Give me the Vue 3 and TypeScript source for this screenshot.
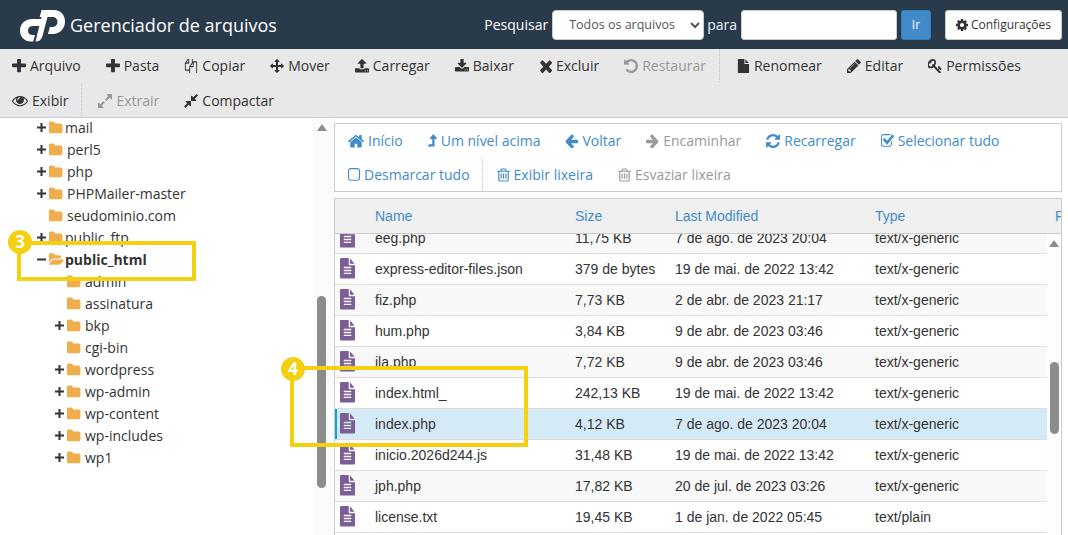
<script setup lang="ts">
interface Icon { d: string; vb: string; w: number; h?: number }
const P: Record<string, Icon> = {
  plus: { vb: '192 192 1408 1408', w: 14, d: 'M1600 736v192q0 40-28 68t-68 28h-416v416q0 40-28 68t-68 28h-192q-40 0-68-28t-28-68v-416h-416q-40 0-68-28t-28-68v-192q0-40 28-68t68-28h416v-416q0-40 28-68t68-28h192q40 0 68 28t28 68v416h416q40 0 68 28t28 68z' },
  files: { vb: '-128 128 2048 1536', w: 14, d: 'M1696 384q40 0 68 28t28 68v1216q0 40-28 68t-68 28h-960q-40 0-68-28t-28-68v-288h-544q-40 0-68-28t-28-68v-672q0-40 20-88t48-76l408-408q28-28 76-48t88-20h416q40 0 68 28t28 68v328q68-40 128-40h416zm-544 213l-299 299h299v-299zm-640-384l-299 299h299v-299zm196 647l316-316v-416h-384v416q0 40-28 68t-68 28h-416v640h512v-256q0-40 20-88t48-76zm956 804v-1152h-384v416q0 40-28 68t-68 28h-416v640h896z' },
  arrows: { vb: '0 0 1792 1792', w: 14, d: 'M1792 896q0 26-19 45l-256 256q-19 19-45 19t-45-19-19-45v-128h-384v384h128q26 0 45 19t19 45-19 45l-256 256q-19 19-45 19t-45-19l-256-256q-19-19-19-45t19-45 45-19h128v-384h-384v128q0 26-19 45t-45 19-45-19l-256-256q-19-19-19-45t19-45l256-256q19-19 45-19t45 19 19 45v128h384v-384h-128q-26 0-45-19t-19-45 19-45l256-256q19-19 45-19t45 19l256 256q19 19 19 45t-19 45-45 19h-128v384h384v-128q0-26 19-45t45-19 45 19l256 256q19 19 19 45z' },
  upload: { vb: '64 64 1664 1664', w: 14, d: 'M1344 1472q0-26-19-45t-45-19-45 19-19 45 19 45 45 19 45-19 19-45zm256 0q0-26-19-45t-45-19-45 19-19 45 19 45 45 19 45-19 19-45zm128-224v320q0 40-28 68t-68 28h-1472q-40 0-68-28t-28-68v-320q0-40 28-68t68-28h427q21 56 70.500 92t110.500 36h256q61 0 110.500-36t70.500-92h427q40 0 68 28t28 68zm-325-648q-17 40-59 40h-256v448q0 26-19 45t-45 19h-256q-26 0-45-19t-19-45v-448h-256q-42 0-59-40-17-39 14-69l448-448q18-19 45-19t45 19l448 448q31 30 14 69z' },
  download: { vb: '64 64 1664 1664', w: 14, d: 'M1344 1344q0-26-19-45t-45-19-45 19-19 45 19 45 45 19 45-19 19-45zm256 0q0-26-19-45t-45-19-45 19-19 45 19 45 45 19 45-19 19-45zm128-224v320q0 40-28 68t-68 28h-1472q-40 0-68-28t-28-68v-320q0-40 28-68t68-28h465l135 136q58 56 136 56t136-56l136-136h464q40 0 68 28t28 68zm-325-569q17 41-14 70l-448 448q-18 19-45 19t-45-19l-448-448q-31-29-14-70 17-39 59-39h256v-448q0-26 19-45t45-19h256q26 0 45 19t19 45v448h256q42 0 59 39z' },
  times: { vb: '182 238 1308 1316', w: 13, d: 'M1490 1322q0 40-28 68l-136 136q-28 28-68 28t-68-28l-294-294-294 294q-28 28-68 28t-68-28l-136-136q-28-28-28-68t28-68l294-294-294-294q-28-28-28-68t28-68l136-136q28-28 68-28t68 28l294 294 294-294q28-28 68-28t68 28l136 136q28 28 28 68t-28 68l-294 294 294 294q28 28 28 68z' },
  undo: { vb: '128 128 1536 1536', w: 14, d: 'M1664 896q0 156-61 298t-164 245-245 164-298 61q-172 0-327-72.500t-264-204.500q-7-10-6.500-22.500t8.500-20.500l137-138q10-9 25-9 16 2 23 12 73 95 179 147t225 52q104 0 198.500-40.500t163.500-109.500 109.500-163.500 40.500-198.500-40.500-198.500-109.500-163.500-163.500-109.500-198.500-40.500q-98 0-188 35.500t-160 101.500l137 138q31 30 14 69-17 40-59 40h-448q-26 0-45-19t-19-45v-448q0-42 40-59 39-17 69 14l130 129q107-101 244.500-156.500t284.500-55.500q156 0 298 61t245 164 164 245 61 298z' },
  file: { vb: '-128 0 1920 1792', w: 14, d: 'M1152 512v-472q22 14 36 28l408 408q14 14 28 36h-472zm-128 32q0 40 28 68t68 28h544v1056q0 40-28 68t-68 28h-1344q-40 0-68-28t-28-68v-1600q0-40 28-68t68-28h800v544z' },
  pencil: { vb: '128 128 1536 1536', w: 14, d: 'M491 1536l91-91-235-235-91 91v107h128v128h107zm523-928q0-22-22-22-10 0-17 7l-542 542q-7 7-7 17 0 22 22 22 10 0 17-7l542-542q7-7 7-17zm-54-192l416 416-832 832h-416v-416zm683 96q0 53-37 90l-166 166-416-416 166-165q36-38 90-38 53 0 91 38l235 234q37 39 37 91z' },
  key: { vb: '64 128 1664 1536', w: 14, d: 'M832 512q0-80-56-136t-136-56-136 56-56 136q0 42 19 83-41-19-83-19-80 0-136 56t-56 136 56 136 136 56 136-56 56-136q0-42-19-83 41 19 83 19 80 0 136-56t56-136zm851 704q0 17-49 66t-66 49q-9 0-28.500-16t-36.500-33-38.500-40-24.500-26l-96 96 220 220q28 28 28 68 0 42-39 81t-81 39q-40 0-68-28l-671-671q-176 131-365 131-163 0-265.500-102.500t-102.500-265.500q0-160 95-313t248-248 313-95q163 0 265.500 102.500t102.500 265.500q0 189-131 365l355 355 96-96q-3-3-26-24.500t-40-38.500-33-36.500-16-28.500q0-17 49-66t66-49q13 0 23 10 6 6 46 44.500t82 79.500 86.500 86 73 78 28.500 41z' },
  eye: { vb: '0 160 1792 1568', w: 16, d: 'M1664 960q-152-236-381-353 61 104 61 225 0 185-131.500 316.500t-316.500 131.500-316.500-131.500-131.500-316.500q0-121 61-225-229 117-381 353 133 205 333.500 326.500t434.500 121.500 434.500-121.500 333.500-326.500zm-720-384q0-20-14-34t-34-14q-125 0-214.500 89.500t-89.500 214.500q0 20 14 34t34 14 34-14 14-34q0-86 61-147t147-61q20 0 34-14t14-34zm848 384q0 34-20 69-140 230-376.500 368.500t-499.500 138.500-499.500-139-376.500-368q-20-35-20-69t20-69q140-229 376.500-368t499.500-139 499.500 139 376.500 368q20 35 20 69z' },
  expand: { vb: '128 128 1536 1536', w: 14, d: 'M883 1056q0 13-10 23l-332 332 144 144q19 19 19 45t-19 45-45 19h-448q-26 0-45-19t-19-45v-448q0-26 19-45t45-19 45 19l144 144 332-332q10-10 23-10t23 10l114 114q10 10 10 23zm781-864v448q0 26-19 45t-45 19-45-19l-144-144-332 332q-10 10-23 10t-23-10l-114-114q-10-10-10-23t10-23l332-332-144-144q-19-19-19-45t19-45 45-19h448q26 0 45 19t19 45z' },
  compress: { vb: '128 128 1536 1536', w: 14, d: 'M896 960v448q0 26-19 45t-45 19-45-19l-144-144-332 332q-10 10-23 10t-23-10l-114-114q-10-10-10-23t10-23l332-332-144-144q-19-19-19-45t19-45 45-19h448q26 0 45 19t19 45zm755-672q0 13-10 23l-332 332 144 144q19 19 19 45t-19 45-45 19h-448q-26 0-45-19t-19-45v-448q0-26 19-45t45-19 45 19l144 144 332-332q10-10 23-10t23 10l114 114q10 10 10 23z' },
  cog: { vb: '128 128 1536 1536', w: 12, h: 12, d: 'M1152 896q0-106-75-181t-181-75-181 75-75 181 75 181 181 75 181-75 75-181zm512-109v222q0 12-8 23t-20 13l-185 28q-19 54-39 91 35 50 107 138 10 12 10 25t-9 23q-27 37-99 108t-94 71q-12 0-26-9l-138-108q-44 23-91 38-16 136-29 186-7 28-36 28h-222q-14 0-24.500-8.500t-11.500-21.500l-28-184q-49-16-90-37l-141 107q-10 9-25 9-14 0-25-11-126-114-165-168-7-10-7-23 0-12 8-23 15-21 51-66.500t54-70.500q-27-50-41-99l-183-27q-13-2-21-12.500t-8-23.500v-222q0-12 8-23t19-13l186-28q14-46 39-92-40-57-107-138-10-12-10-24 0-10 9-23 26-36 98.500-107.500t94.500-71.500q13 0 26 10l138 107q44-23 91-38 16-136 29-186 7-28 36-28h222q14 0 24.500 8.500t11.500 21.500l28 184q49 16 90 37l142-107q9-9 24-9 13 0 25 10 129 119 165 170 7 8 7 22 0 12-8 23-15 21-51 66.500t-54 70.500q26 50 41 98l183 28q13 2 21 12.500t8 23.500z' },
  home: { vb: '92 160 1608 1440', w: 16, d: 'M1472 992v480q0 26-19 45t-45 19h-384v-384h-256v384h-384q-26 0-45-19t-19-45v-480q0-1 .5-3t.5-3l575-474 575 474q1 2 1 6zm223-69l-62 74q-8 9-21 11h-3q-13 0-21-7l-692-577-692 577q-12 8-24 7-13-2-21-11l-62-74q-8-10-7-23.500t11-21.500l719-599q32-26 76-26t76 26l244 204v-195q0-14 9-23t23-9h192q14 0 23 9t9 23v408l219 182q10 8 11 21.500t-7 23.500z' },
  levelUp: { vb: '420 128 990 1536', w: 9, d: 'M1395 635q-17 33-59 33h-192v800q0 14-9 23t-23 9h-704q-21 0-29-18-8-20 4-35l160-192q9-11 25-11h320v-576h-192q-41 0-59-33-17-34 6-64l320-384q18-22 49-22t49 22l320 384q23 30 6 64z' },
  left: { vb: '128 128 1536 1536', w: 13, d: 'M1664 896v128q0 53-32.500 90.500t-84.500 37.500h-704l293 294q38 36 38 90t-38 90l-75 76q-37 37-90 37-52 0-91-37l-651-652q-37-37-37-90 0-52 37-91l651-650q38-38 91-38 52 0 90 38l75 74q38 38 38 91t-38 91l-293 293h704q52 0 84.500 37.500t32.500 90.500z' },
  right: { vb: '128 128 1536 1536', w: 13, d: 'M1600 960q0 54-37 91l-651 651q-39 37-91 37-51 0-90-37l-75-75q-38-38-38-91t38-91l293-293h-704q-52 0-84.500-37.500t-32.500-90.500v-128q0-53 32.500-90.500t84.500-37.500h704l-293-294q-38-36-38-90t38-90l75-75q38-38 90-38 53 0 91 38l651 651q37 35 37 90z' },
  refresh: { vb: '128 128 1536 1536', w: 14, d: 'M1639 1056q0 5-1 7-64 268-268 434.500t-478 166.500q-146 0-282.500-55t-243.500-157l-129 129q-19 19-45 19t-45-19-19-45v-448q0-26 19-45t45-19h448q26 0 45 19t19 45-19 45l-137 137q71 66 161 102t187 36q134 0 250-65t186-179q11-17 53-117 8-23 30-23h192q13 0 22.500 9.500t9.500 22.500zm25-800v448q0 26-19 45t-45 19h-448q-26 0-45-19t-19-45 19-45l138-138q-148-137-349-137-134 0-250 65t-186 179q-11 17-53 117-8 23-30 23h-199q-13 0-22.500-9.500t-9.500-22.500v-7q65-268 270-434.500t480-166.500q146 0 284 55.500t245 156.500l130-129q19-19 45-19t45 19 19 45z' },
  check: { vb: '64 128 1664 1536', w: 13, d: 'M1472 930v318q0 119-84.500 203.500t-203.500 84.500h-832q-119 0-203.500-84.500t-84.500-203.500v-832q0-119 84.500-203.500t203.500-84.500h832q63 0 117 25 15 7 18 23 3 17-9 29l-49 49q-10 10-23 10-3 0-9-2-23-6-45-6h-832q-66 0-113 47t-47 113v832q0 66 47 113t113 47h832q66 0 113-47t47-113v-254q0-13 9-22l64-64q10-10 23-10 6 0 12 3 20 8 20 29zm231-489l-814 814q-24 24-57 24t-57-24l-430-430q-24-24-24-57t24-57l110-110q24-24 57-24t57 24l263 263 647-647q24-24 57-24t57 24l110 110q24 24 24 57t-24 57z' },
  square: { vb: '192 128 1408 1536', w: 12, d: 'M1312 256h-832q-66 0-113 47t-47 113v832q0 66 47 113t113 47h832q66 0 113-47t47-113v-832q0-66-47-113t-113-47zm288 160v832q0 119-84.500 203.500t-203.500 84.500h-832q-119 0-203.500-84.500t-84.500-203.500v-832q0-119 84.500-203.500t203.500-84.500h832q119 0 203.500 84.500t84.500 203.500z' },
  trash: { vb: '192 64 1408 1664', w: 13, d: 'M704 736v576q0 14-9 23t-23 9h-64q-14 0-23-9t-9-23v-576q0-14 9-23t23-9h64q14 0 23 9t9 23zm256 0v576q0 14-9 23t-23 9h-64q-14 0-23-9t-9-23v-576q0-14 9-23t23-9h64q14 0 23 9t9 23zm256 0v576q0 14-9 23t-23 9h-64q-14 0-23-9t-9-23v-576q0-14 9-23t23-9h64q14 0 23 9t9 23zm128 724v-948h-896v948q0 22 7 40.500t14.500 27 10.500 8.500h832q3 0 10.500-8.500t14.500-27 7-40.500zm-672-1076h448l-48-117q-7-9-17-11h-317q-10 2-17 11zm928 32v64q0 14-9 23t-23 9h-96v948q0 83-47 143.500t-113 60.500h-832q-66 0-113-58.500t-47-141.500v-952h-96q-14 0-23-9t-9-23v-64q0-14 9-23t23-9h309l70-167q15-37 54-63t79-26h320q40 0 79 26t54 63l70 167h309q14 0 23 9t9 23z' }
}
const folderD = 'M1600 648v704q0 92-66 158t-158 66h-1216q-92 0-158-66t-66-158v-960q0-92 66-158t158-66h320q92 0 158 66t66 158v32h672q92 0 158 66t66 158z'
const folderOpenD = 'M1815 952q0 31-31 66l-336 396q-43 51-120.500 86.500t-143.500 35.500h-1088q-34 0-60.500-13t-26.500-43q0-31 31-66l336-396q43-51 120.500-86.500t143.500-35.500h1088q34 0 60.500 13t26.500 43zm-343-344v160h-832q-94 0-197 47.500t-164 119.500l-337 396-5 6q0-4-.5-12.500t-.5-12.500v-960q0-92 66-158t158-66h320q92 0 158 66t66 158v32h544q92 0 158 66t66 158z'
const fileTextD = 'M1596 476q14 14 28 36h-472v-472q22 14 36 28zm-476 164h544v1056q0 40-28 68t-68 28h-1344q-40 0-68-28t-28-68v-1600q0-40 28-68t68-28h800v544q0 40 28 68t68 28zm160 736v-64q0-14-9-23t-23-9h-704q-14 0-23 9t-9 23v64q0 14 9 23t23 9h704q14 0 23-9t9-23zm0-256v-64q0-14-9-23t-23-9h-704q-14 0-23 9t-9 23v64q0 14 9 23t23 9h704q14 0 23-9t9-23zm0-256v-64q0-14-9-23t-23-9h-704q-14 0-23 9t-9 23v64q0 14 9 23t23 9h704q14 0 23-9t9-23z'

const attrs = (i: Icon) => ({ viewBox: i.vb, width: i.w, height: i.h ?? 14, preserveAspectRatio: 'none' })

interface Tool { icon: Icon; label: string; off?: boolean }
const row1: Tool[] = [
  { icon: P.plus, label: 'Arquivo' }, { icon: P.plus, label: 'Pasta' }, { icon: P.files, label: 'Copiar' },
  { icon: P.arrows, label: 'Mover' }, { icon: P.upload, label: 'Carregar' }, { icon: P.download, label: 'Baixar' },
  { icon: P.times, label: 'Excluir' }, { icon: P.undo, label: 'Restaurar', off: true }
]
const row1b: Tool[] = [{ icon: P.file, label: 'Renomear' }, { icon: P.pencil, label: 'Editar' }, { icon: P.key, label: 'Permissões' }]
const row2b: Tool[] = [{ icon: P.expand, label: 'Extrair', off: true }, { icon: P.compress, label: 'Compactar' }]
const nav1: Tool[] = [
  { icon: P.home, label: 'Início' }, { icon: P.levelUp, label: 'Um nível acima' }, { icon: P.left, label: 'Voltar' },
  { icon: P.right, label: 'Encaminhar', off: true }, { icon: P.refresh, label: 'Recarregar' }, { icon: P.check, label: 'Selecionar tudo' }
]
const nav2b: Tool[] = [{ icon: P.trash, label: 'Exibir lixeira' }, { icon: P.trash, label: 'Esvaziar lixeira', off: true }]

const tree = [
  { n: 'mail', l: 1, t: 'plus' }, { n: 'perl5', l: 1, t: 'plus', w: 1 }, { n: 'php', l: 1, t: 'plus', w: 1 },
  { n: 'PHPMailer-master', l: 1, t: 'plus', w: 1 }, { n: 'seudominio.com', l: 1, t: '', w: 1 },
  { n: 'public_ftp', l: 1, t: 'plus' }, { n: 'public_html', l: 1, t: 'minus', open: 1 },
  { n: 'admin', l: 2, t: '' }, { n: 'assinatura', l: 2, t: '' }, { n: 'bkp', l: 2, t: 'plus' }, { n: 'cgi-bin', l: 2, t: '' },
  { n: 'wordpress', l: 2, t: 'plus' }, { n: 'wp-admin', l: 2, t: 'plus' }, { n: 'wp-content', l: 2, t: 'plus' },
  { n: 'wp-includes', l: 2, t: 'plus' }, { n: 'wp1', l: 2, t: 'plus' }
]

const files = [
  ['eeg.php', '11,75 KB', '7 de ago. de 2023 20:04', 'text/x-generic'],
  ['express-editor-files.json', '379 de bytes', '19 de mai. de 2022 13:42', 'text/x-generic'],
  ['fiz.php', '7,73 KB', '2 de abr. de 2023 21:17', 'text/x-generic'],
  ['hum.php', '3,84 KB', '9 de abr. de 2023 03:46', 'text/x-generic'],
  ['ila.php', '7,72 KB', '9 de abr. de 2023 03:46', 'text/x-generic'],
  ['index.html_', '242,13 KB', '19 de mai. de 2022 13:42', 'text/x-generic'],
  ['index.php', '4,12 KB', '7 de ago. de 2023 20:04', 'text/x-generic'],
  ['inicio.2026d244.js', '31,48 KB', '19 de mai. de 2022 13:42', 'text/x-generic'],
  ['jph.php', '17,82 KB', '20 de jul. de 2023 03:26', 'text/x-generic'],
  ['license.txt', '19,45 KB', '1 de jan. de 2022 05:45', 'text/plain']
]
</script>

<template>
  <div class="page">
    <header class="top">
      <div class="brand">
        <svg class="logo" viewBox="0 0 45 32">
          <path d="M23.500 9L21.600 16H13Q8 16 8 20.500Q8 25 13 25H15L13.200 31.500H11C4 31.500 0 26.500 0 20.500C0 14 5 9 12 9Z" fill="#fff" />
          <path d="M21.500 0H34C41 0 45 5.500 45 11.500C45 18.500 39.500 24 33 24H28L29.800 17H32.500C35.500 17 37.500 14.500 37.500 12C37.500 9 35.500 7 32.500 7H27.500L22.500 26Q21 31.500 15.500 31.500L21.500 7H19.700Z" fill="#fff" />
        </svg>
        <span class="title">Gerenciador de arquivos</span>
      </div>
      <form class="search" @submit.prevent>
        <label class="lbl">Pesquisar</label>
        <select class="scope"><option>Todos os arquivos</option></select>
        <label class="lbl para">para</label>
        <input class="inp" type="text" />
        <button class="go" type="button">Ir</button>
        <button class="cfg" type="button"><svg class="ic" v-bind="attrs(P.cog)"><path :d="P.cog.d" /></svg>Configurações</button>
      </form>
    </header>

    <div class="toolbar">
      <div class="tool-row">
        <span v-for="t in row1" :key="t.label" class="tool" :class="{ off: t.off }"><svg class="ic" v-bind="attrs(t.icon)"><path :d="t.icon.d" /></svg>{{ t.label }}</span>
        <span class="sep"></span>
        <span v-for="t in row1b" :key="t.label" class="tool"><svg class="ic" v-bind="attrs(t.icon)"><path :d="t.icon.d" /></svg>{{ t.label }}</span>
      </div>
      <div class="tool-row">
        <span class="tool"><svg class="ic" v-bind="attrs(P.eye)"><path :d="P.eye.d" /></svg>Exibir</span>
        <span class="sep"></span>
        <span v-for="t in row2b" :key="t.label" class="tool" :class="{ off: t.off }"><svg class="ic" v-bind="attrs(t.icon)"><path :d="t.icon.d" /></svg>{{ t.label }}</span>
      </div>
    </div>

    <div class="main">
      <aside class="side">
        <ul class="tree">
          <li v-for="f in tree" :key="f.n" class="node" :class="['lv' + f.l, { wide: f.w, cur: f.open }]">
            <span class="tog">
              <svg v-if="f.t === 'plus'" viewBox="0 0 9 9"><path d="M3.500 0h2v3.500H9v2H5.500V9h-2V5.500H0v-2h3.500z" /></svg>
              <svg v-else-if="f.t === 'minus'" viewBox="0 0 9 9"><path d="M0 3.500h9v2H0z" /></svg>
            </span>
            <svg class="fold" :viewBox="f.open ? '0 0 1830 1792' : '0 0 1664 1792'"><path :d="f.open ? folderOpenD : folderD" /></svg>
            <span class="fname">{{ f.n }}</span>
          </li>
        </ul>
        <div class="vbar">
          <span class="arrow"></span>
          <span class="thumb side-thumb"></span>
        </div>
      </aside>

      <section class="content">
        <nav class="navbox">
          <div class="nav-row">
            <span v-for="t in nav1" :key="t.label" class="nav" :class="{ off: t.off }"><svg class="ic" v-bind="attrs(t.icon)"><path :d="t.icon.d" /></svg>{{ t.label }}</span>
          </div>
          <div class="nav-row">
            <span class="nav"><svg class="ic" v-bind="attrs(P.square)"><path :d="P.square.d" /></svg>Desmarcar tudo</span>
            <span class="sep short"></span>
            <span v-for="t in nav2b" :key="t.label" class="nav" :class="{ off: t.off }"><svg class="ic" v-bind="attrs(t.icon)"><path :d="t.icon.d" /></svg>{{ t.label }}</span>
          </div>
        </nav>

        <div class="table">
          <div class="thead">
            <span class="c-name">Name</span>
            <span class="c-size">Size</span>
            <span class="c-date">Last Modified</span>
            <span class="c-type">Type</span>
            <span class="c-perm">Permissions</span>
          </div>
          <div class="tbody">
            <div class="rows">
              <div v-for="(r, i) in files" :key="r[0]" class="row" :class="{ alt: i % 2 === 0, picked: r[0] === 'index.php' }">
                <svg class="doc" viewBox="128 0 1536 1792" preserveAspectRatio="none"><path :d="fileTextD" /></svg>
                <span class="c-name">{{ r[0] }}</span>
                <span class="c-size">{{ r[1] }}</span>
                <span class="c-date">{{ r[2] }}</span>
                <span class="c-type">{{ r[3] }}</span>
              </div>
            </div>
            <div class="vbar table-bar">
              <span class="arrow"></span>
              <span class="thumb table-thumb"></span>
            </div>
          </div>
        </div>
      </section>

      <div class="mark mark3"></div>
      <span class="badge badge3">3</span>
      <div class="mark mark4"></div>
      <span class="badge badge4">4</span>
    </div>
  </div>
</template>

<style>
html, body { margin: 0; background: #fff; }
</style>

<style scoped>
.page { width: 1068px; height: 535px; overflow: hidden; font-family: "Open Sans", sans-serif; font-size: 14px; color: #333; display: flex; flex-direction: column; }
.top { height: 49px; flex: none; background: #293a4a; display: flex; align-items: center; justify-content: space-between; padding: 0 6px 0 20px; box-sizing: border-box; }
.brand { display: flex; align-items: center; }
.logo { width: 45px; height: 32px; margin-top: 2px; }
.title { color: #fff; font-size: 18px; margin-left: 5px; }
.search { display: flex; align-items: center; margin: 0; }
.lbl { color: #fff; font-size: 14px; }
.scope { width: 152px; height: 30px; margin-left: 4px; background: #fff; border: 1px solid #ccc; border-radius: 4px; font: 12.500px "Open Sans", sans-serif; color: #555; padding: 0 0 0 12px; box-sizing: border-box; }
.para { margin-left: 3px; color: #eaf5fc; }
.inp { width: 156px; height: 30px; margin-left: 4px; box-sizing: border-box; border: 1px solid #ccc; border-radius: 3px; background: #fff; padding: 0; }
.go { width: 30px; height: 30px; margin-left: 4px; background: #428bca; border: 1px solid #357ebd; border-radius: 3px; color: #fff; font: 12px "Open Sans", sans-serif; padding: 0; }
.cfg { width: 117px; height: 30px; margin-left: 14px; background: #fff; border: 1px solid #ccc; border-radius: 3px; color: #333; font: 12px "Open Sans", sans-serif; padding: 0; display: flex; align-items: center; justify-content: center; gap: 3px; }
.ic { fill: currentColor; flex: none; }
.toolbar { height: 69px; flex: none; box-sizing: border-box; background: #e8e8e8; border-bottom: 1px solid #ccc; display: flex; flex-direction: column; gap: 2px; }
.tool-row { display: flex; height: 33px; align-items: center; }
.tool { display: inline-flex; align-items: center; gap: 4px; padding: 0 13px 0 12px; white-space: nowrap; color: #333; }
.tool.off, .nav.off { color: #999; }
.sep { width: 0; height: 33px; border-left: 1px dotted #c4c4c4; flex: none; margin-right: 4px; }
.main { flex: 1; min-height: 0; display: flex; position: relative; }
.side { width: 334px; flex: none; display: flex; justify-content: space-between; overflow: hidden; }
.tree { list-style: none; margin: -2px 0 0; padding: 0; }
.node { height: 22px; display: flex; align-items: center; white-space: nowrap; }
.tog { width: 10px; height: 9px; flex: none; }
.tog svg { display: block; width: 9px; height: 9px; fill: #333; }
.lv1 { padding-left: 37px; }
.lv2 { padding-left: 55px; }
.fold { width: 14px; height: 15px; margin-left: 2px; fill: #f0ad4e; flex: none; }
.cur .fold { width: 15px; }
.fname { margin-left: 2px; }
.wide .fname { margin-left: 4px; }
.lv2 .fname { margin-left: 4px; }
.cur .fname { font-weight: 700; margin-left: 1px; }
.vbar { width: 21px; background: #fbfbfb; position: relative; flex: none; }
.arrow { position: absolute; left: 4px; top: 6px; border: 5px solid transparent; border-top: 0; border-bottom: 7px solid #8c8c8c; }
.thumb { position: absolute; left: 4px; width: 9px; background: #8c8c8c; border-radius: 5px; }
.side-thumb { top: 178px; height: 192px; }
.content { flex: 1; min-width: 0; display: flex; flex-direction: column; gap: 6px; padding: 5px 6px 0 0; }
.navbox { height: 69px; flex: none; box-sizing: border-box; border: 1px solid #ccc; display: flex; flex-direction: column; gap: 1px; }
.nav-row { display: flex; align-items: center; height: 33px; }
.nav { display: inline-flex; align-items: center; gap: 4px; color: #428bca; padding: 0 12px 0 13px; white-space: nowrap; }
.short { margin-right: 1px; }
.table { flex: 1; min-height: 0; display: flex; flex-direction: column; border: 1px solid #ccc; border-bottom: 0; font-family: "Liberation Sans", Arial, sans-serif; }
.thead { height: 35px; flex: none; box-sizing: border-box; background: #f0f0f0; border-bottom: 1px solid #ccc; display: flex; align-items: center; color: #428bca; padding-left: 40px; overflow: hidden; white-space: nowrap; }
.c-name { width: 200px; flex: none; }
.c-size { width: 100px; flex: none; }
.c-date { width: 200px; flex: none; }
.c-type { width: 180px; flex: none; }
.c-perm { flex: none; }
.tbody { flex: 1; min-height: 0; display: flex; overflow: hidden; }
.rows { flex: 1; min-width: 0; margin-top: -11px; }
.row { height: 31px; box-sizing: border-box; border-bottom: 1px solid #ddd; display: flex; align-items: center; padding-left: 40px; position: relative; white-space: nowrap; background: #fff; }
.row.alt { background: #f8f8f8; }
.row.picked { background: #d5eaf7; box-shadow: inset 2px 0 0 #08a2dc; }
.doc { position: absolute; left: 5px; top: 4px; width: 15px; height: 20.500px; fill: #7c5e96; }
.table-bar { width: 14px; background: #fdfdfd; }
.table-bar .arrow { left: 2px; top: 6px; }
.table-bar .thumb { left: 3px; top: 128px; height: 72px; }
.mark { position: absolute; box-sizing: border-box; border: 4px solid #f3d012; pointer-events: none; }
.mark3 { left: 17px; top: 123px; width: 179px; height: 40px; }
.mark4 { left: 290px; top: 248px; width: 238px; height: 81px; }
.badge { position: absolute; width: 24px; height: 24px; border-radius: 50%; background: #f3d012; color: #fff; font-weight: 700; font-size: 17px; line-height: 24px; text-align: center; }
.badge3 { left: 8px; top: 112px; }
.badge4 { left: 281px; top: 239px; }
</style>
